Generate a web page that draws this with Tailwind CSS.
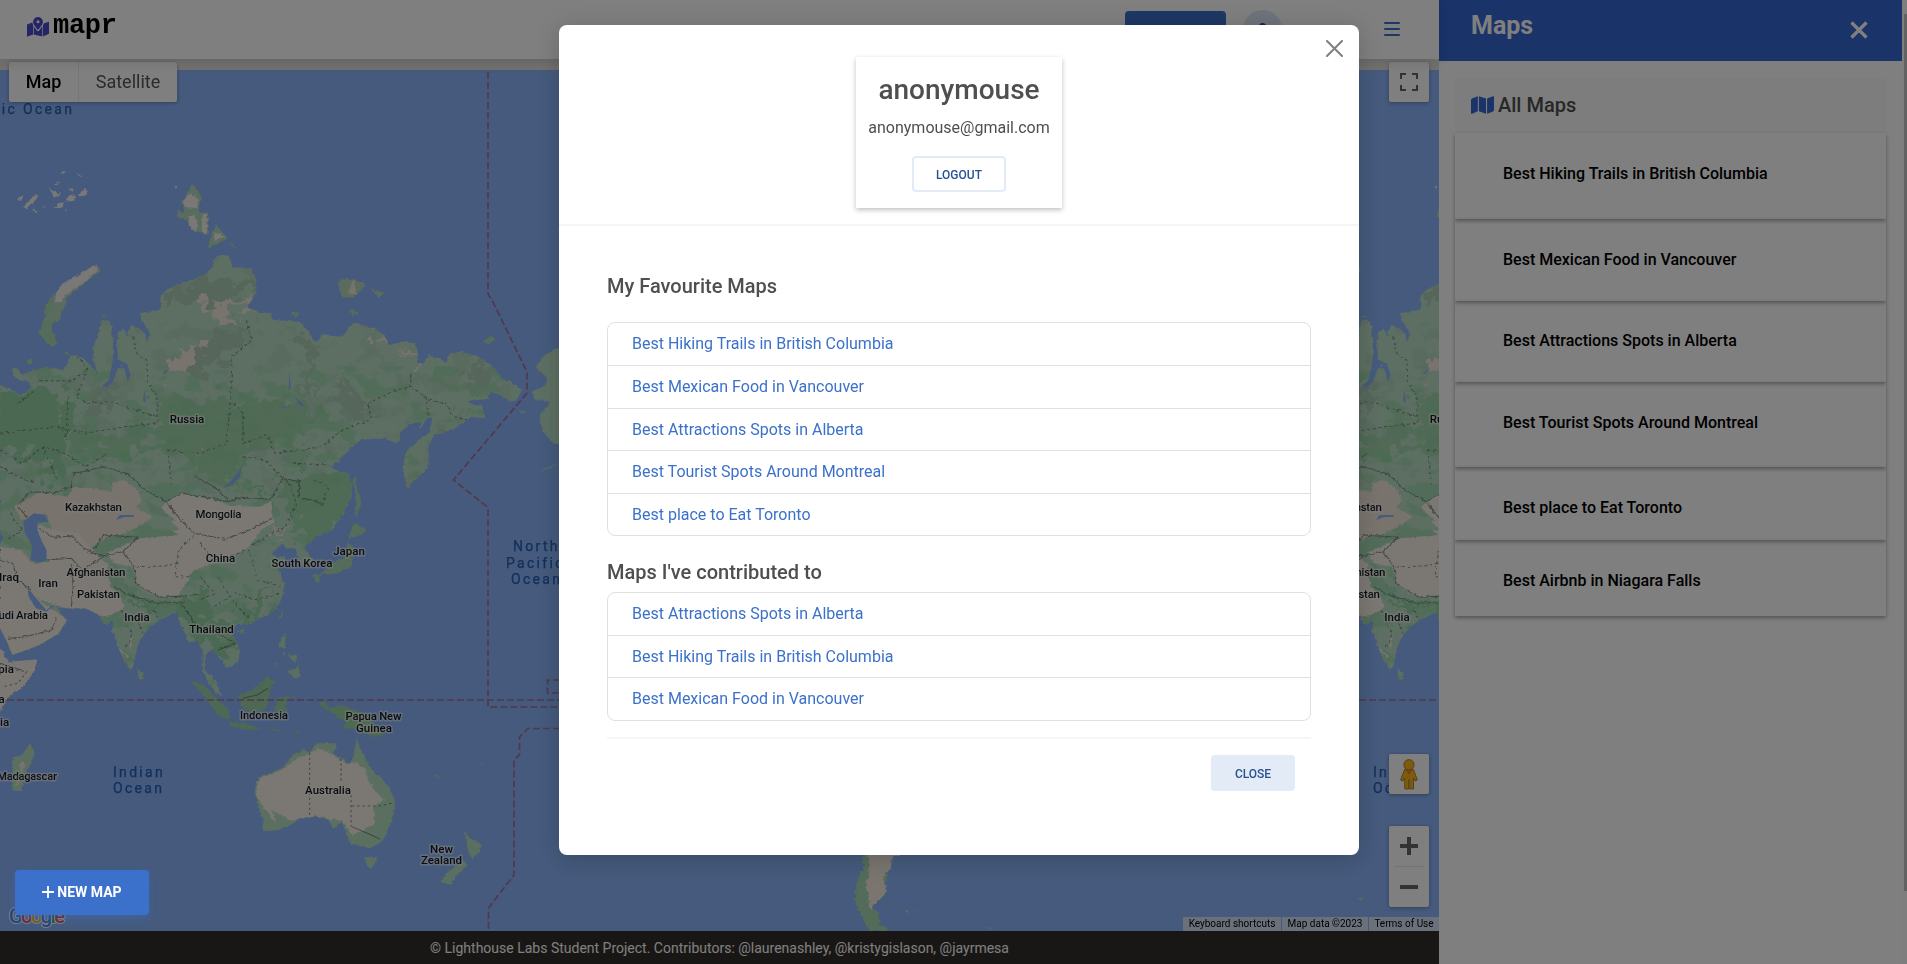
<!DOCTYPE html>
<html lang="en">
<head>
<meta charset="utf-8">
<title>mapr</title>
<script src="https://cdn.jsdelivr.net/npm/@tailwindcss/browser@4"></script>
</head>
<body class="font-[Roboto,sans-serif] text-[16px] leading-[1.6] text-[#4f4f4f]">
<div class="relative flex h-[964px] w-[1907px] overflow-hidden bg-white">

  <!-- Page column -->
  <div class="flex w-[1439px] flex-col">
    <header class="relative z-10 flex h-[59px] items-center bg-white pl-[27px] pr-[39px] shadow-[0_4px_12px_rgba(0,0,0,0.12)]">
      <svg class="mb-[5px] h-[20px] w-[22px]" viewBox="0 0 22 20">
        <g fill="#4a4acb">
          <path d="M0 7.400 5.200 5.600 6.200 8V17.600L0 19.800ZM6.900 9.400 9.600 13.300Q11 15.300 12.400 13.300L15.200 9.300V19.400L6.900 17.400ZM15.900 8.300 17 6.300 22 4.800V16.800L15.900 19.400Z"/>
          <path d="M11 0a4.900 4.900 0 0 1 4.900 4.900C15.900 7.200 12.800 10.600 11 13 9.200 10.600 6.100 7.200 6.100 4.900A4.900 4.900 0 0 1 11 0Z"/>
        </g>
        <circle cx="11" cy="4.700" r="1.500" fill="#fff"/>
      </svg>
      <span class="mb-[6px] ml-[4px] font-['Liberation_Mono',monospace] text-[27px] font-bold leading-none tracking-[-0.3px] text-black">mapr</span>
      <div class="ml-auto flex items-center">
        <div class="h-[37px] w-[101px] rounded-[4px] bg-[#3b71ca]"></div>
        <div class="ml-[17px] flex h-[39px] w-[39px] items-start justify-center rounded-full bg-[#dfe7f6] pt-[13px]">
          <div class="h-[7px] w-[7px] rounded-full bg-[#285192]"></div>
        </div>
        <div class="mb-[2px] ml-[102px] flex w-[16px] flex-col gap-[4px]">
          <span class="h-[2px] rounded bg-[#3b71ca]"></span>
          <span class="h-[2px] rounded bg-[#3b71ca]"></span>
          <span class="h-[2px] rounded bg-[#3b71ca]"></span>
        </div>
      </div>
    </header>

    <main class="relative h-[872px] overflow-hidden bg-[#e5e3df] pt-[11px]">
      <svg class="block h-[861px] w-[1439px] bg-[#8ab4f8]" viewBox="0 0 1439 861">
        <defs>
          <filter id="rough" x="-2%" y="-2%" width="104%" height="104%" color-interpolation-filters="sRGB">
            <feTurbulence type="fractalNoise" baseFrequency="0.09" numOctaves="3" seed="4" result="n"/>
            <feDisplacementMap in="SourceGraphic" in2="n" scale="12" xChannelSelector="R" yChannelSelector="G"/>
          </filter>
          <filter id="veryrough" x="-5%" y="-5%" width="110%" height="110%" color-interpolation-filters="sRGB">
            <feTurbulence type="fractalNoise" baseFrequency="0.022" numOctaves="5" seed="9" result="n"/>
            <feDisplacementMap in="SourceGraphic" in2="n" scale="150" xChannelSelector="R" yChannelSelector="G"/>
          </filter>
          <filter id="forest" x="0" y="0" width="100%" height="100%" color-interpolation-filters="sRGB">
            <feTurbulence type="fractalNoise" baseFrequency="0.014 0.02" numOctaves="5" seed="12"/>
            <feColorMatrix values="0 0 0 0 .6  0 0 0 0 .84  0 0 0 0 .66  9 0 0 0 -4.800"/>
          </filter>
          <filter id="tundra" x="0" y="0" width="100%" height="100%" color-interpolation-filters="sRGB">
            <feTurbulence type="fractalNoise" baseFrequency="0.016 0.014" numOctaves="5" seed="31"/>
            <feColorMatrix values="0 0 0 0 .68  0 0 0 0 .8  0 0 0 0 .72  0 9 0 0 -4.800"/>
          </filter>
          <path id="eurasia" d="M0 255 20 265 40 275 60 285 85 268 82 245 60 240 40 232 35 205 50 205 60 225 90 212 130 200 180 210 200 165 230 170 252 195 275 225 262 180 262 140 275 100 285 60 310 65 316 120 316 210 340 200 345 185 330 180 328 140 330 100 345 85 355 110 368 75 400 90 412 125 420 100 395 60 395 38 420 35 450 25 450-15 480-40 540-60 575-78 595-100 600-120 620-138 642-130 652-98 700-95 715-70 718-30 705 0 690 22 720 35 760 40 765 60 800 62 840 65 865 95 885 130 900 105 960 110 975 85 990 68 1050 85 1075 105 1090 135 1130 125 1160 130 1170 150 1168 190 1185 190 1200 165 1230 175 1250 185 1260 160 1290 155 1340 170 1380 200 1415 245 1425 240 1445 255 1462 270 1445 300 1430 305 1400 285 1372 275 1365 297 1335 300 1310 300 1325 315 1350 315 1357 355 1320 350 1275 385 1240 400 1215 405 1200 440 1200 490 1190 515 1160 540 1140 570 1128 500 1135 460 1170 420 1205 395 1210 350 1195 355 1175 390 1180 365 1140 375 1120 400 1115 430 1070 415 1010 420 985 440 960 470 930 500 950 515 975 520 985 560 980 600 960 640 930 690 905 700 880 712 865 730 850 745 878 780 860 800 838 795 832 760 825 745 800 745 790 732 760 760 775 775 795 768 800 785 780 810 797 850 790 890 770 930 730 955 690 975 660 970 645 990 660 1020 672 1055 668 1085 635 1105 620 1080 595 1050 580 1055 573 1080 572 1110 590 1125 608 1150 620 1187 605 1180 585 1150 566 1110 568 1050 550 1020 530 1030 520 1005 500 960 495 935 470 950 450 960 425 975 400 1010 385 1040 378 1075 365 1112 350 1090 330 1040 315 990 318 955 300 975 280 960 285 950 260 935 240 925 200 925 165 925 158 908 130 930 105 900 85 872 78 870 80 890 100 925 130 935 160 908 162 925 187 960 165 1000 110 1035 35 1065 22 1030 0 985Z"/>
          <clipPath id="landclip"><use href="#eurasia"/></clipPath>
          <g id="asia" transform="translate(0 230) scale(.35714 .33333)">
            <use href="#eurasia" fill="#bbdfc5" filter="url(#rough)"/>
            <g clip-path="url(#landclip)">
              <rect x="0" y="-140" width="1470" height="720" filter="url(#tundra)" opacity=".55"/>
              <rect x="0" y="200" width="1470" height="1000" filter="url(#forest)" opacity=".7"/>
              <g filter="url(#veryrough)">
                <g fill="#97d2a4">
                  <path d="M-40 300 100 260 190 270 205 380 180 500 165 570 130 480 60 450-40 470Z"/>
                  <path opacity=".75" d="M450 290 600 300 800 300 900 330 850 400 780 430 690 460 660 550 570 540 530 470 430 450 220 480 210 400 440 400Z"/>
                  <path opacity=".8" d="M780 550 920 500 1020 520 1015 600 950 690 880 750 830 720 820 640 790 650Z"/>
                  <path d="M500 930 560 880 600 960 640 1000 670 1060 620 1040 570 1030 530 1030Z"/>
                  <path d="M640 560 760 580 780 600 720 590ZM690 900 780 880 740 950 680 960ZM310 860 380 890 450 910 540 900 530 930 420 920 330 900Z"/>
                </g>
                <g fill="#adcdb7">
                  <path d="M460-40 700-80 710-30 600 10 480 10ZM560 130 640 90 690 60 690 120 620 190 540 250 520 200ZM840 90 880 140 870 260 900 310 850 280 850 180ZM940 220 1000 290 1040 350 1010 370 960 320ZM1280 190 1360 200 1400 250 1330 230 1290 240ZM270 240 340 290 300 330 230 300Z"/>
                </g>
                <g fill="#f1e6da">
                  <path d="M480 145 555 140 560 170 520 210 490 210ZM580 10 660-10 690 20 640 50 600 50ZM900 110 960 115 930 130ZM1150 150 1180 180 1160 190ZM1040 85 1070 110 1050 125ZM750 680 790 680 770 710ZM345 1040 380 1050 365 1080Z"/>
                </g>
              </g>
              <g fill="#f6efe5" filter="url(#rough)">
                <path fill="#f2e7da" d="M40 620 110 578 190 590 205 560 260 565 310 578 318 545 350 540 385 570 395 600 380 625 430 650 350 700 280 720 230 770 150 700 130 640 60 660Z"/>
                <path d="M465 605 510 580 600 600 650 618 720 620 760 605 760 650 770 665 730 690 700 740 650 770 600 790 540 812 520 850 500 885 440 890 400 870 375 830 370 800 320 790 300 760 340 740 390 712 500 690 480 660 440 640Z"/>
                <path d="M100 670 150 690 220 700 260 750 310 800 330 870 350 925 300 950 200 930 100 895 190 960 165 1005 110 1040 35 1070 0 1000 0 740 60 750 90 790 130 785 130 750 105 700Z"/>
              </g>
              <g fill="#a6d8b2" filter="url(#rough)"><path d="M265 755 300 710 385 700 400 685 480 690 500 705 390 715 340 735 290 765ZM410 600 470 640 490 660 420 640ZM0 690 60 715 85 750 40 745 0 720ZM300 800 330 800 360 880 350 900 310 860Z"/></g>
              <g fill="#8ab4f8">
                <path d="M95 640 65 665 70 700 90 735 85 780 110 788 130 780 130 750 115 720 105 690 105 668 135 665 125 645ZM0 700 10 715 0 728ZM677 495 672 530 650 555 625 565 645 545 665 520ZM325 660 335 645 375 645 375 650 345 652ZM810 220 815 260 808 270ZM825 290 855 318 840 318ZM316 180 330 185 355 190 365 225 358 247 348 205 330 205 316 245 300 262 285 258 305 240ZM456 220 472 205 465 220ZM400 300 405 270 408 310ZM785 320 820 318 790 325Z"/>
              </g>
              <g fill="none" stroke="#5c6b63" stroke-width="3" stroke-opacity=".7" stroke-linejoin="round" filter="url(#rough)">
                <path d="M55 610 85 575 150 578 200 560 205 522 290 500 360 522 400 565 465 605 510 580 570 590 640 605 680 592 760 598 790 535 840 545 835 590 900 610M465 605 510 665 545 700 630 718 700 690 760 655M545 530 600 560 640 600M50 620 75 650M110 685 150 712 200 708 240 750 285 768 345 755 385 712 290 705 265 745M345 755 375 800M130 780 200 775 230 810 290 770M200 790 205 860 200 920M375 800 380 850 445 892 520 888 555 882M320 860 360 885 440 910 520 905M0 780 35 790 50 840 85 870M22 1015 60 1012 110 1000 145 990 160 950M505 910 540 960 560 990M610 1000 660 1030 610 1050"/>
                <g stroke-dasharray="9 7">
                  <path d="M110 242 205 242 245 205M215 165 245 205 215 290 240 310 310 305 440 350M375 110 380 160 410 180 415 250 440 290 440 370 350 380 240 400 150 380 0 400M690 60 705 120 650 170 645 300 635 430 560 460 470 450M655 310 680 340 680 430 750 405 770 460 900 440 960 390 1040 360 1030 310 1110 270 1150 260 1150 220M1150 260 1190 290 1200 350M1200 300 1250 310 1270 350 1310 360M820 490 930 495M50 310 100 270M190 290 185 420M0 450 60 490 120 440 180 460 240 500 300 460M470 450 480 550M680 470 740 480 810 550 830 610 800 680 760 700 700 740M545 705 500 750 490 830 530 830M560 730 600 780 700 750M380 800 460 798 500 790M560 830 600 880 560 900M610 830 650 900 700 960M700 760 720 840 790 860M600 920 660 880 720 900 780 880M340 930 370 1000 350 1050M380 950 400 1000M430 930 440 950M30 640 60 690 20 720M0 500 50 530 100 550M880 540 920 560 900 620M120 440 160 540"/>
                </g>
              </g>
            </g>
            <g fill="#acd9b6" filter="url(#rough)">
              <path d="M995 525 1000 570 1012 600 1002 650 992 640 998 590 988 550ZM990 668 1028 690 1010 705 975 715ZM975 728 990 740 985 800 940 822 900 820 930 790 968 770ZM875 825 897 825 890 852ZM778 960 793 930 790 952ZM665 992 686 985 680 1003Z"/>
              <path d="M150-20 178-5 150 50 145 90 162 132 140 137 108 100 125 50 128 20ZM175 145 195 165 185 165ZM75 180 90 175 92 190 78 192ZM1352 125 1375 108 1390 118 1370 130ZM815 35 840 38 828 55ZM980 25 1008 42 985 46ZM285 50 300 45 300 52Z"/>
            </g>
          </g>
          <g id="north" transform="translate(0 -70) scale(.35714 .33333)" filter="url(#rough)">
            <path fill="#b2d8bc" d="M540 552 566 590 555 640 582 635 582 705 545 692 525 660 495 650 498 630 520 640 508 610ZM605 675 637 715 580 747 590 710ZM645 725 660 740 650 745ZM945 850 960 835 990 838 1024 855 1010 875 985 893 958 890ZM1037 865 1080 880 1060 892ZM270 792 282 810 190 890 165 965 125 965 155 890 190 845Z"/>
            <path fill="#f4f1ee" d="M262 797 275 805 262 825 215 862 190 880 172 905 152 910 160 870 185 845 220 825 250 805ZM533 578 555 595 552 625 512 620 520 590ZM545 645 530 650 528 675 545 692 555 680ZM565 645 580 640 580 700 565 697ZM600 695 633 712 600 722ZM48 600 65 585 60 602ZM65 620 90 590 106 585 100 600 75 625ZM135 565 160 578 172 580 158 595ZM148 558 160 545 166 550ZM172 516 182 513 180 522ZM216 524 228 524 222 530ZM185 605 192 588 210 582 208 605ZM192 570 204 565 204 576ZM218 585 240 565 244 580 225 592ZM150 625 165 608 180 608 172 624ZM88 628 102 634 96 638ZM118 615 128 618 124 624ZM182 630 188 630 186 638ZM485 560 498 558 494 568Z"/>
            <path fill="#f1e6da" d="M975 880 990 838 998 885Z"/>
          </g>
          <g id="south" transform="translate(0 550) scale(.35714 .33333)">
            <g fill="#b4dfbf" filter="url(#rough)">
              <path fill="#f6efe5" d="M0 83 25 125 105 118 95 155 60 205 20 235 0 275Z"/>
              <path d="M383 145 402 158 400 178 388 177ZM785 55 800 42 798 88 780 82ZM805 155 835 140 842 165 825 178ZM788 95 798 98 795 104ZM805 100 832 108 828 130 812 115ZM770 135 778 125 775 140ZM35 415 65 400 85 368 97 400 70 470 60 512 35 514 34 470Z"/>
              <path fill="#9bd1a7" d="M533 182 570 195 610 240 642 270 640 302 610 285 580 240 555 210ZM640 305 690 312 735 327 700 330 645 318ZM670 225 700 215 750 168 770 185 755 210 755 240 740 270 700 277 675 257ZM778 232 832 228 800 242 803 275 768 272ZM890 250 910 243 920 265 955 256 1030 283 1040 310 1075 347 1040 347 990 325 958 325 970 310 930 282ZM750 325 790 328 785 335ZM815 345 845 330 830 342ZM865 235 866 252 860 245Z"/>
              <path d="M715 490 730 470 790 445 815 410 850 388 870 395 885 368 940 370 945 385 930 400 980 430 990 410 997 353 1010 390 1027 420 1037 445 1060 465 1090 500 1107 545 1097 600 1072 662 1037 684 980 672 970 640 955 605 935 632 920 600 885 590 840 595 810 618 765 632 735 632 735 600 720 545 713 510ZM1020 712 1057 712 1050 730 1038 749 1028 737ZM1300 630 1315 655 1350 672 1340 700 1320 720 1310 690ZM1298 720 1308 735 1275 770 1262 797 1233 785 1250 760ZM1215 460 1232 475 1225 472ZM1345 428 1352 430 1346 434Z"/>
              <path fill="#f6efe5" d="M718 490 735 472 795 447 830 415 870 400 890 385 925 400 970 432 1000 430 1025 450 1030 480 1055 520 1078 540 1045 560 1050 610 1010 635 985 645 955 600 920 598 885 588 840 594 815 605 800 590 760 570 775 612 745 570 720 535Z"/>
              <path fill="#f1e6da" d="M55 430 72 425 60 470ZM45 480 55 485 45 500Z"/>
            </g>
            <g fill="none" stroke="#5c6b63" stroke-width="3" stroke-opacity=".7">
              <path d="M680 235 720 225 750 205M0 130 60 150M985 620 1040 645 1065 658"/>
              <path stroke-dasharray="7 8" d="M867 398V590M955 415V490M983 525V620M985 558H1060L1105 548M45 150 75 155 50 190 10 200"/>
            </g>
          </g>
        </defs>
        <use href="#asia"/><use href="#north"/><use href="#south"/>
        <use href="#asia" x="1260"/><use href="#north" x="1260"/><use href="#south" x="1260"/>
        <path fill="#bbdfc5" filter="url(#rough)" transform="translate(0 230) scale(.35714 .33333)" d="M1600 140 1560 145 1530 160 1500 200 1530 235 1525 260 1488 275 1500 300 1540 305 1510 350 1520 395 1550 430 1600 440ZM1448 330 1472 335 1465 340ZM1492 405 1502 403 1500 410ZM1515 512 1565 488 1540 505Z"/>
        <g transform="translate(540 630) scale(.574 .33333)" filter="url(#rough)">
          <path fill="#a6d8b2" d="M558 440 565 500 550 550 548 600 560 650 575 693 608 695 592 670 590 640 575 620 600 560 612 460Z"/>
          <path fill="#f4eadf" d="M572 440V520L568 560 575 630 605 575 598 535 612 505V475L630 460V440Z"/>
          <path fill="#b4dfbf" d="M636 636 642 630 642 642ZM650 630 654 630 652 637ZM778 678 788 688 782 685ZM1426 595 1436 595 1430 602Z"/>
        </g>
        <g fill="none" stroke="#a4709a" stroke-width="1.700" stroke-dasharray="7 3">
          <path d="M488 2V224L492 230 527 302V323L453.500 410 488 437.500V637H560M560 610H547.500V623H560"/>
          <path d="M7 630H560M1359 630H1439"/>
          <path d="M560 658.500H528L519.500 667V685L514 690V805L488.500 838V861"/>
        </g>
        <g font-family="Roboto, sans-serif" font-size="11.500" font-weight="500" fill="#16181c" stroke="#fff" stroke-opacity=".5" stroke-width="3" paint-order="stroke" stroke-linejoin="round" text-anchor="middle">
          <text x="187" y="353">Russia</text><text x="1447" y="353">Russia</text>
          <text x="93.500" y="441" textLength="57">Kazakhstan</text><text x="1353.500" y="441" textLength="57">Kazakhstan</text>
          <text x="218.500" y="448" textLength="46">Mongolia</text>
          <text x="220.500" y="492">China</text>
          <text x="349" y="485">Japan</text>
          <text x="302" y="497" textLength="61">South Korea</text>
          <text x="96" y="506" textLength="59">Afghanistan</text><text x="1356" y="506" textLength="59">Afghanistan</text>
          <text x="9" y="511">Iraq</text><text x="48" y="517">Iran</text>
          <text x="98.500" y="528" textLength="43">Pakistan</text><text x="1358.500" y="528" textLength="43">Pakistan</text>
          <text x="137" y="551">India</text><text x="1397" y="551">India</text>
          <text x="17" y="549" textLength="62">Saudi Arabia</text>
          <text x="-18" y="484">Türkiye</text>
          <text x="211.500" y="563">Thailand</text>
          <text x="-7" y="603">Ethiopia</text><text x="-11" y="633">Kenya</text><text x="-14" y="656">Tanzania</text>
          <text x="264" y="649" textLength="48">Indonesia</text>
          <text x="373.500" y="650" textLength="56">Papua New</text><text x="374" y="661.500">Guinea</text>
          <text x="27" y="710" textLength="60">Madagascar</text>
          <text x="328" y="724">Australia</text>
          <text x="441.500" y="783">New</text><text x="441.500" y="794">Zealand</text>
        </g>
        <g font-family="Roboto, sans-serif" font-size="14" letter-spacing="2.300" fill="#2461b4" stroke="#2461b4" stroke-width=".25">
          <text x="-33" y="43.500">Arctic Ocean</text>
          <text x="513" y="481">North</text><text x="506" y="497.500">Pacific</text><text x="511" y="514">Ocean</text>
          <text x="113" y="706.500">Indian</text><text x="113" y="722.500">Ocean</text>
          <text x="1373" y="706.500">Indian</text><text x="1373" y="722.500">Ocean</text>
        </g>
        <text x="9" y="853" font-family="Roboto, sans-serif" font-size="20" font-weight="500" stroke="#fff" stroke-width="2" paint-order="stroke" textLength="56"><tspan fill="#4285f4">G</tspan><tspan fill="#ea4335">o</tspan><tspan fill="#fbbc05">o</tspan><tspan fill="#4285f4">g</tspan><tspan fill="#34a853">l</tspan><tspan fill="#ea4335">e</tspan></text>
      </svg>

      <!-- Map controls -->
      <div class="absolute left-[9px] top-[3px] flex h-[40px] w-[168px] items-center rounded-[2px] bg-white text-[18px] leading-none shadow-[0_1px_4px_rgba(0,0,0,0.3)]">
        <span class="flex h-full w-[70px] items-center justify-center border-r border-[#ececec] font-medium text-black">Map</span>
        <span class="flex-1 text-center text-[#565656]">Satellite</span>
      </div>
      <div class="absolute right-[10px] top-[3px] flex h-[40px] w-[40px] items-center justify-center rounded-[2px] bg-white shadow-[0_1px_4px_rgba(0,0,0,0.3)]">
        <svg class="h-[18px] w-[18px]" viewBox="0 0 18 18"><path fill="#666" d="M0 0v6h2V2h4V0H0Zm16 0h-4v2h4v4h2V0h-2Zm0 16h-4v2h6v-6h-2v4ZM2 12H0v6h6v-2H2v-4Z"/></svg>
      </div>
      <div class="absolute right-[10px] top-[695px] flex h-[40px] w-[40px] items-center justify-center rounded-[2px] bg-white shadow-[0_1px_4px_rgba(0,0,0,0.3)]">
        <svg class="h-[31px] w-[18px]" viewBox="0 0 18 31"><g fill="#fbb41a" stroke="#a07420" stroke-width=".8"><path d="M4.500 10.500H13.500L17.400 21 15 22 13.500 19V30H9.700V21H8.600V30H4.700V19L3 22 .6 21Z"/><circle cx="9" cy="5.800" r="5.200"/></g><path fill="#f07d24" d="M5.500 10.800H12.500L9 15.500Z"/></svg>
      </div>
      <div class="absolute right-[10px] top-[767px] flex h-[81px] w-[40px] flex-col items-center rounded-[2px] bg-white shadow-[0_1px_4px_rgba(0,0,0,0.3)]">
        <svg class="h-[40px] w-[40px]" viewBox="0 0 40 40"><path fill="#666" d="M18 11h4v7h7v4h-7v7h-4v-7h-7v-4h7Z"/></svg>
        <div class="h-px w-[30px] bg-[#e6e6e6]"></div>
        <svg class="h-[40px] w-[40px]" viewBox="0 0 40 40"><path fill="#666" d="M11 18h18v4H11Z"/></svg>
      </div>
      <div class="absolute bottom-0 right-0 flex h-[14px] gap-px text-[10px] leading-[14px] text-black">
        <span class="w-[98px] bg-[#f5f5f5]/70 text-center">Keyboard shortcuts</span>
        <span class="w-[86px] bg-[#f5f5f5]/70 text-center">Map data ©2023</span>
        <span class="w-[70px] bg-[#f5f5f5]/70 text-center">Terms of Use</span>
      </div>
    </main>

    <footer class="flex h-[33px] items-center justify-center bg-[#332f2b] pt-[2px] text-[14px] text-white">© Lighthouse Labs Student Project. Contributors: @laurenashley, @kristygislason, @jayrmesa</footer>
  </div>

  <!-- Maps drawer -->
  <aside class="flex w-[463px] flex-col bg-white">
    <div class="flex h-[61px] items-center justify-between bg-[#3466d2] pl-[32px] pr-[33px] text-white">
      <h2 class="mb-[10px] text-[25px] font-bold leading-none">Maps</h2>
      <svg class="mb-[2px] h-[20px] w-[20px]" viewBox="0 0 20 20"><path d="M2.500 2.500 17.500 17.500M17.500 2.500 2.500 17.500" stroke="#fff" stroke-width="3.400"/></svg>
    </div>
    <div class="px-4 pt-[17px]">
      <div class="flex h-[55px] items-center gap-[4px] bg-[#fbfbfb] pb-[2px] pl-4 text-[20px] font-medium">
        <svg class="h-[18px] w-[23px]" viewBox="0 0 23 18"><path fill="#3466d2" d="M0 4Q0 3 1 2.500L6.800.2V15.200L1 17.700Q0 18 0 17ZM7.900.2 15 2.400V17.700L7.900 15.300ZM16.100 2.400 22 .2Q23 0 23 1V14Q23 15 22 15.400L16.100 17.700Z"/></svg>
        <span>All Maps</span>
      </div>
      <ul class="font-medium text-black">
        <li class="h-[86px] pl-12 pt-[28px] shadow-[0_2px_4px_rgba(0,0,0,0.35)]">Best Hiking Trails in British Columbia</li>
        <li class="h-[82px] pl-12 pt-[28px] shadow-[0_2px_4px_rgba(0,0,0,0.35)]">Best Mexican Food in Vancouver</li>
        <li class="h-[81px] pl-12 pt-[27px] shadow-[0_2px_4px_rgba(0,0,0,0.35)]">Best Attractions Spots in Alberta</li>
        <li class="h-[85px] pl-12 pt-[28px] shadow-[0_2px_4px_rgba(0,0,0,0.35)]">Best Tourist Spots Around Montreal</li>
        <li class="h-[73px] pl-12 pt-[28px] shadow-[0_2px_4px_rgba(0,0,0,0.35)]">Best place to Eat Toronto</li>
        <li class="h-[76px] pl-12 pt-[28px] shadow-[0_2px_4px_rgba(0,0,0,0.35)]">Best Airbnb in Niagara Falls</li>
      </ul>
    </div>
  </aside>
  <div class="flex w-[5px] justify-end bg-[#fcfcfc] pt-[14px]"><div class="h-[877px] w-[3px] bg-[#c4c4c4]"></div></div>

  <!-- Backdrop -->
  <div class="absolute inset-0 z-20 bg-black/50"></div>

  <button class="absolute left-[15px] top-[870px] z-30 flex h-[45px] w-[134px] items-center justify-center gap-[3px] rounded-[4px] bg-[#3b71ca] pb-[2px] text-[14px] font-bold leading-none text-white shadow-[0_4px_10px_rgba(59,113,202,0.4)]">
    <svg class="h-[12px] w-[12px]" viewBox="0 0 12 12"><path d="M6 .5V11.500M.5 6H11.500" stroke="#fff" stroke-width="1.800" stroke-linecap="round"/></svg>NEW MAP
  </button>

  <!-- Profile modal -->
  <div class="absolute left-[559px] top-[25px] z-30 flex h-[830px] w-[800px] flex-col rounded-[8px] bg-white shadow-[0_4px_24px_rgba(0,0,0,0.18)]">
    <svg class="absolute right-[16px] top-[15px] h-[17px] w-[17px]" viewBox="0 0 17 17"><path d="M1 1 16 16M16 1 1 16" stroke="#7f7f7f" stroke-width="2" stroke-linecap="round"/></svg>
    <div class="flex h-[201px] justify-center border-b-2 border-[#f5f5f5] pt-8">
      <div class="flex h-[151px] w-[206px] flex-col items-center shadow-[0_2px_5px_rgba(0,0,0,0.25)]">
        <h4 class="mt-[16px] text-[28px] font-medium leading-[34px]">anonymouse</h4>
        <p class="mt-[8px] leading-[26px]">anonymouse@gmail.com</p>
        <button class="mt-[15px] h-[36px] w-[94px] rounded-[4px] border-2 border-[#e3ebf7] pt-[2px] text-[12px] font-medium leading-none text-[#285192]">LOGOUT</button>
      </div>
    </div>
    <div class="px-12">
      <h5 class="mt-[48px] text-[20px] font-medium leading-6">My Favourite Maps</h5>
      <ul class="mt-[24.4px] divide-y divide-[#e0e0e0] rounded-[8px] border border-[#e0e0e0] text-[#3b71ca]">
        <li class="px-6 py-2">Best Hiking Trails in British Columbia</li>
        <li class="px-6 py-2">Best Mexican Food in Vancouver</li>
        <li class="px-6 py-2">Best Attractions Spots in Alberta</li>
        <li class="px-6 py-2">Best Tourist Spots Around Montreal</li>
        <li class="px-6 py-2">Best place to Eat Toronto</li>
      </ul>
      <h5 class="mt-[23.6px] text-[20px] font-medium leading-6">Maps I've contributed to</h5>
      <ul class="mt-[8px] divide-y divide-[#e0e0e0] rounded-[8px] border border-[#e0e0e0] text-[#3b71ca]">
        <li class="px-6 py-2">Best Attractions Spots in Alberta</li>
        <li class="px-6 py-2">Best Hiking Trails in British Columbia</li>
        <li class="px-6 py-2">Best Mexican Food in Vancouver</li>
      </ul>
      <div class="mt-4 flex justify-end border-t-2 border-[#f5f5f5] pr-4 pt-4">
        <button class="h-[36px] w-[84px] rounded-[4px] bg-[#e3ebf7] pt-[2px] text-[12px] font-medium leading-none text-[#285192]">CLOSE</button>
      </div>
    </div>
  </div>
</div>
</body>
</html>
